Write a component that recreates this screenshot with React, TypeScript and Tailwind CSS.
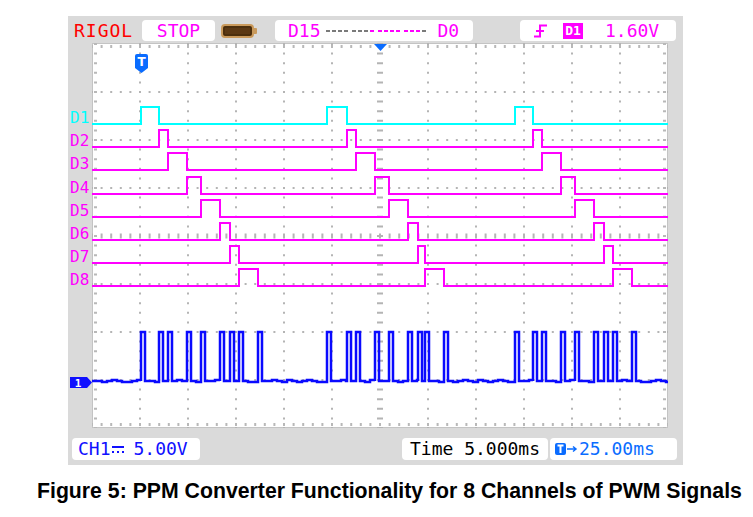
import React from 'react';

const MONO = "font-['DejaVu_Sans_Mono',monospace]";
const X0 = 92;
const Y0 = 43;
const W = 576;
const H = 385;

// page x of each channel's rising edge per frame; the last entry is where D8 falls
const FRAMES = [
  [141, 159, 168, 187, 201, 220, 230, 239, 258],
  [327, 347, 356, 375, 389, 408, 418, 425, 444],
  [515, 533, 542, 561, 575, 594, 604, 613, 632],
];

const LABELS = ['D1', 'D2', 'D3', 'D4', 'D5', 'D6', 'D7', 'D8'];

function lowY(i: number) {
  return Math.round(124 + 23.2 * i) - Y0;
}

function channelPath(i: number) {
  const low = lowY(i);
  const high = low - 17;
  let d = `M0 ${low}`;
  for (const f of FRAMES) {
    d += ` H${f[i] - X0} V${high} H${f[i + 1] - X0} V${low}`;
  }
  return d + ` H${W}`;
}

// PPM output: a short pulse at every channel edge, noisy baseline between
function ppmPath() {
  const base = 338;
  const high = 289;
  const noise = [0, 1, 0, -1, 0, 1, 1, 0, -1, 0, 1, -1];
  let d = `M0 ${base}`;
  let x = 0;
  let k = 0;
  const step = (to: number) => {
    while (x + 5 < to) {
      x += 5;
      d += ` H${x} V${base + noise[k++ % noise.length]}`;
    }
    d += ` H${to} V${base}`;
  };
  for (const p of FRAMES.flat().map((v) => v - X0)) {
    step(p);
    d += ` V${high} H${p + 4} V${base}`;
    x = p + 4;
  }
  step(W);
  return d;
}

function Battery() {
  return (
    <svg width="36" height="14" viewBox="0 0 36 14" className="ml-[6px]">
      <rect x="1" y="1" width="31" height="12" rx="3" fill="#5b3813" stroke="#c99a5c" strokeWidth="2" />
      <rect x="3" y="3" width="27" height="8" rx="1" fill="none" stroke="#3f2608" strokeWidth="1" />
      <rect x="32" y="4" width="4" height="6" rx="1" fill="#c99a5c" />
    </svg>
  );
}

function BitDots() {
  return (
    <div className="ml-[5px] flex gap-[4px]">
      {[0, 1, 2, 3].map((g) => (
        <div key={g} className="flex gap-[2px]">
          {[0, 1, 2, 3].map((k) => {
            const bit = 15 - (g * 4 + k);
            const on = bit >= 1 && bit <= 8;
            return <span key={k} className={`h-[2px] w-[4px] ${on ? 'bg-[#ff00ff]' : 'bg-[#7a7a7a]'}`} />;
          })}
        </div>
      ))}
    </div>
  );
}

function EdgeIcon() {
  return (
    <svg width="15" height="14" viewBox="0 0 15 14">
      <path d="M1 12.5 H7 V1.5 H14 M3 7 H11" stroke="#ff00ff" strokeWidth="2" fill="none" />
    </svg>
  );
}

function Header() {
  return (
    <div className={`flex h-[27px] items-center pt-[2px] ${MONO} text-[18px] leading-none`}>
      <span className="ml-[6px] w-[68px] tracking-[1px] text-[#ff0000]">RIGOL</span>
      <div className="flex h-[21px] w-[73px] items-center justify-center rounded-[4px] bg-white text-[#ff00ff]">
        STOP
      </div>
      <Battery />
      <div className="ml-[18px] flex h-[21px] w-[198px] items-center rounded-[4px] bg-white pl-[13px] text-[#ff00ff]">
        <span>D15</span>
        <BitDots />
        <span className="ml-[12px]">D0</span>
      </div>
      <div className="ml-[47px] flex h-[21px] w-[156px] items-center rounded-[4px] bg-white pl-[13px] text-[#ff00ff]">
        <EdgeIcon />
        <span className="ml-[15px] flex h-[16px] w-[20px] items-center justify-center bg-[#ff00ff] text-[13px] font-bold text-white">
          D1
        </span>
        <span className="ml-[22px]">1.60V</span>
      </div>
    </div>
  );
}

function Ch1Marker() {
  return (
    <svg width="22" height="11" viewBox="0 0 22 11" className="mt-[81px]">
      <path d="M0 0 H17 L22 5.5 L17 11 H0 Z" fill="#1010ff" />
      <text x="8" y="9.5" fill="white" fontSize="11" fontWeight="bold" textAnchor="middle" fontFamily="DejaVu Sans Mono, monospace">
        1
      </text>
    </svg>
  );
}

function LeftStrip() {
  return (
    <div className={`flex w-[24px] flex-col pl-[2px] pt-[67px] ${MONO} text-[16px] leading-none`}>
      {LABELS.map((l, i) => (
        <div key={l} className={`h-[23.2px] ${i === 0 ? 'text-[#00ffff]' : 'text-[#ff00ff]'}`}>
          {l}
        </div>
      ))}
      <Ch1Marker />
    </div>
  );
}

function Screen() {
  const dots = '2 7.6';
  const hLines = [1, 2, 3, 5, 6, 7].map((i) => 1 + 48 * i);
  const vLines = [1, 2, 3, 4, 5, 7, 8, 9, 10, 11].map((k) => 48 * k);
  return (
    <svg width={W} height={H} viewBox={`0 0 ${W} ${H}`} className="block bg-white">
      {/* border with ticks */}
      <rect x="0.5" y="0.5" width={W - 1} height={H - 1} fill="none" stroke="#c4c4c4" />
      <line x1="3.5" x2="3.5" y1="0" y2={H} stroke="#b8b8b8" strokeWidth="3" strokeDasharray={dots} />
      <line x1={W - 3.5} x2={W - 3.5} y1="0" y2={H} stroke="#b8b8b8" strokeWidth="3" strokeDasharray={dots} />
      <line x1="0" x2={W} y1="3.5" y2="3.5" stroke="#b8b8b8" strokeWidth="3" strokeDasharray={dots} strokeDashoffset="1" />
      <line x1="0" x2={W} y1={H - 3.5} y2={H - 3.5} stroke="#b8b8b8" strokeWidth="3" strokeDasharray={dots} strokeDashoffset="1" />

      {/* dotted grid */}
      {hLines.map((y) => (
        <line key={`h${y}`} x1="0" x2={W} y1={y} y2={y} stroke="#b4b4b4" strokeWidth="2" strokeDasharray={dots} strokeDashoffset="1" />
      ))}
      {vLines.map((x) => (
        <line key={`v${x}`} x1={x} x2={x} y1="0" y2={H} stroke="#b4b4b4" strokeWidth="2" strokeDasharray={dots} />
      ))}
      {/* centre axes */}
      <line x1="288" x2="288" y1="0" y2={H} stroke="#b4b4b4" strokeWidth="6" strokeDasharray={dots} />
      <line x1="0" x2={W} y1="193" y2="193" stroke="#b4b4b4" strokeWidth="5" strokeDasharray={dots} strokeDashoffset="1" />

      {/* digital channels */}
      {LABELS.map((l, i) => (
        <path key={l} d={channelPath(i)} fill="none" stroke={i === 0 ? '#00ffff' : '#ff00ff'} strokeWidth="2" />
      ))}

      {/* CH1 analog */}
      <path d={ppmPath()} fill="none" stroke="#0a0aff" strokeWidth="2.5" />

      {/* trigger position markers */}
      <path d="M282 1 H295 L288.5 8 Z" fill="#0a6cff" />
      <path d="M45 11 H54 Q56 11 56 13 V25 L49.5 30 L43 25 V13 Q43 11 45 11 Z" fill="#0a6cff" />
      <text x="49.5" y="23" fill="white" fontSize="12" fontWeight="bold" textAnchor="middle" fontFamily="DejaVu Sans, sans-serif">
        T
      </text>
    </svg>
  );
}

function DcIcon() {
  return (
    <svg width="12" height="9" viewBox="0 0 12 9" className="ml-[1px]">
      <path d="M0 2 H12" stroke="#1010ff" strokeWidth="2" />
      <path d="M0 7 H12" stroke="#1010ff" strokeWidth="2" strokeDasharray="2 3" />
    </svg>
  );
}

function TriggerOffsetIcon() {
  return (
    <svg width="24" height="14" viewBox="0 0 24 14">
      <rect x="0" y="1" width="11" height="12" rx="2" fill="#0a6cff" />
      <path d="M2.5 3.5 H8.5 M5.5 3.5 V11" stroke="white" strokeWidth="2" />
      <path d="M12 7 H21 M18 4.5 L21 7 L18 9.5" stroke="#0a6cff" strokeWidth="1.5" fill="none" />
    </svg>
  );
}

function Footer() {
  return (
    <div className={`flex h-[37px] items-start pt-[10px] ${MONO} text-[18px] leading-none`}>
      <div className="ml-[4px] flex h-[22px] w-[128px] items-center rounded-[4px] bg-white pl-[6px] text-[#1010ff]">
        <span>CH1</span>
        <DcIcon />
        <span className="ml-[10px]">5.00V</span>
      </div>
      <div className="ml-auto flex h-[22px] w-[146px] items-center rounded-[4px] bg-white pl-[8px] text-black">
        Time 5.000ms
      </div>
      <div className="ml-[2px] mr-[6px] flex h-[22px] w-[127px] items-center rounded-[4px] bg-white pl-[5px] text-[#0a6cff]">
        <TriggerOffsetIcon />
        <span>25.00ms</span>
      </div>
    </div>
  );
}

export default function App() {
  return (
    <div className="h-[517px] w-[753px] overflow-hidden bg-white pt-[16px]">
      <div className="ml-[68px] flex h-[449px] w-[615px] flex-col bg-[#dadada]">
        <Header />
        <div className="flex h-[385px]">
          <LeftStrip />
          <Screen />
          <div className="w-[15px]" />
        </div>
        <Footer />
      </div>
      <p className="mt-[16px] whitespace-nowrap pl-[37px] font-['Liberation_Sans',Arial,sans-serif] text-[21.25px] font-bold leading-none text-black">
        Figure 5: PPM Converter Functionality for 8 Channels of PWM Signals
      </p>
    </div>
  );
}
